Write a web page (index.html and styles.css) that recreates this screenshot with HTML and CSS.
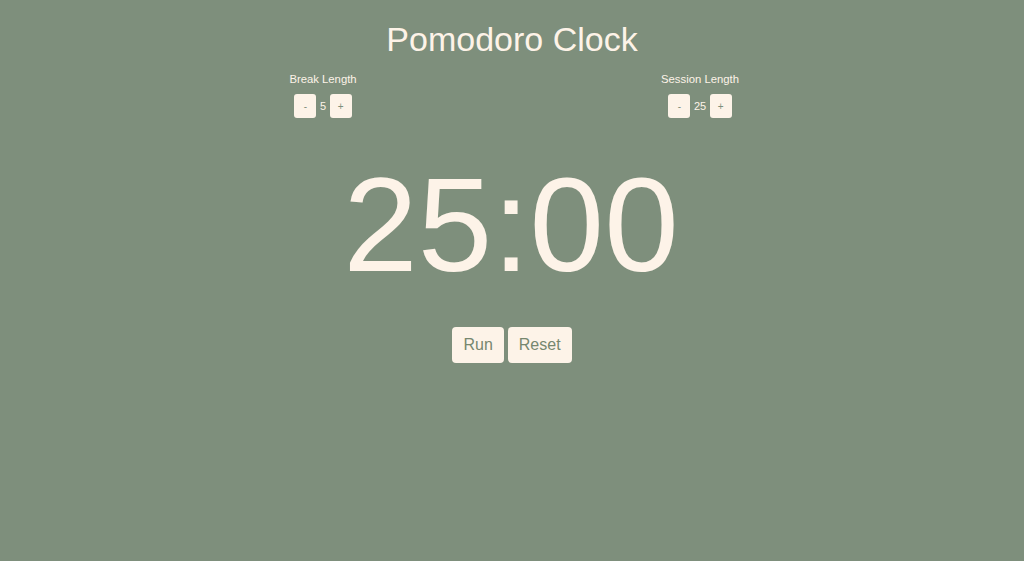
FILE: index.html
```html
<!DOCTYPE html>
<html>
<head>
<meta charset="utf-8">
<title>Pomodoro Clock</title>
<link rel="stylesheet" href="styles.css">
</head>
<body>
<main class="app">
  <h1 class="title">Pomodoro Clock</h1>
  <section class="settings">
    <div class="setting">
      <div class="setting-label">Break Length</div>
      <div class="stepper">
        <button class="step-btn">-</button>
        <span class="step-value">5</span>
        <button class="step-btn">+</button>
      </div>
    </div>
    <div class="setting">
      <div class="setting-label">Session Length</div>
      <div class="stepper">
        <button class="step-btn">-</button>
        <span class="step-value">25</span>
        <button class="step-btn">+</button>
      </div>
    </div>
  </section>
  <div class="clock">25:00</div>
  <div class="controls">
    <button class="ctrl-btn">Run</button>
    <button class="ctrl-btn">Reset</button>
  </div>
</main>
</body>
</html>
```

FILE: styles.css
```css
html, body {
  margin: 0;
  padding: 0;
  height: 100%;
}
body {
  background: #7e8f7c;
  color: #fdf3e8;
  font-family: "Liberation Sans", Arial, sans-serif;
}
.app {
  display: flex;
  flex-direction: column;
  align-items: center;
  padding-top: 19px;
}
.title {
  margin: 0;
  font-size: 34px;
  font-weight: normal;
  line-height: 40px;
}
.settings {
  display: flex;
  justify-content: center;
  gap: 277px;
  margin-top: 12.5px;
  margin-left: -1px;
}
.setting {
  width: 100px;
  display: flex;
  flex-direction: column;
  align-items: center;
}
.setting-label {
  font-size: 11.3px;
  line-height: 14px;
}
.stepper {
  display: flex;
  align-items: center;
  gap: 3.5px;
  margin-top: 8.5px;
}
.step-btn {
  width: 22px;
  height: 24px;
  padding: 0;
  border: none;
  border-radius: 3px;
  background: #fdf3e8;
  color: #7e8f7c;
  font-family: "Liberation Sans", Arial, sans-serif;
  font-size: 10px;
}
.step-value {
  font-size: 11px;
}
.clock {
  margin-top: 40px;
  font-size: 134px;
  line-height: 134px;
  margin-left: -2px;
}
.controls {
  display: flex;
  gap: 4px;
  margin-top: 35px;
}
.ctrl-btn {
  height: 36px;
  padding: 0 11px;
  border: none;
  border-radius: 4px;
  background: #fdf3e8;
  color: #76876f;
  font-family: "Liberation Sans", Arial, sans-serif;
  font-size: 16px;
}
```
